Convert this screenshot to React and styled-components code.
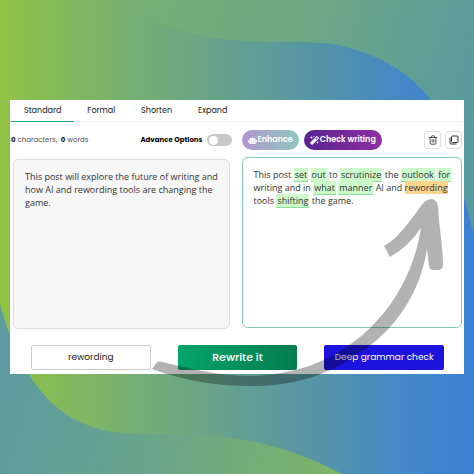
import React, { useState } from 'react'
import styled, { createGlobalStyle } from 'styled-components'
import { FaRobot, FaMagic } from 'react-icons/fa'
import { Trash2 } from 'lucide-react'

const GlobalStyle = createGlobalStyle`
  * {
    box-sizing: border-box;
  }
  body {
    margin: 0;
    font-family: Poppins, Inter, 'Liberation Sans', sans-serif;
    color: #333;
  }
  button, input {
    font-family: inherit;
  }
`

const tabs = ['Standard', 'Formal', 'Shorten', 'Expand']

function Backdrop() {
  return (
    <BackdropSvg viewBox="0 0 474 474" preserveAspectRatio="none" aria-hidden="true">
      <defs>
        <linearGradient id="base" x1="0" x2="1" y1="0" y2="0">
          <stop offset="0" stopColor="#90c346" />
          <stop offset="0.3" stopColor="#74ad76" />
          <stop offset="0.62" stopColor="#5a98a0" />
          <stop offset="0.85" stopColor="#4488c6" />
          <stop offset="1" stopColor="#3b80d4" />
        </linearGradient>
        <linearGradient id="top" gradientUnits="userSpaceOnUse" x1="130" y1="20" x2="474" y2="130">
          <stop offset="0" stopColor="#76ae74" />
          <stop offset="0.5" stopColor="#6ca786" />
          <stop offset="1" stopColor="#5999a0" />
        </linearGradient>
        <linearGradient id="bottom" gradientUnits="userSpaceOnUse" x1="0" y1="380" x2="330" y2="474">
          <stop offset="0" stopColor="#5d9ba0" />
          <stop offset="0.5" stopColor="#69a58a" />
          <stop offset="1" stopColor="#7cb468" />
        </linearGradient>
      </defs>
      <rect width="474" height="474" fill="url(#base)" />
      <path
        d="M125 0C140 20 190 42 275 42C305 42 325 41 350 48C390 60 412 76 431 100C450 128 460 185 474 235V0Z"
        fill="url(#top)"
      />
      <path
        d="M0 305C6 324 14 350 29 374C50 410 85 433 135 434C170 435 200 432 240 439C280 446 310 457 342 474H0Z"
        fill="url(#bottom)"
      />
    </BackdropSvg>
  )
}

function Arrow() {
  return (
    <ArrowSvg viewBox="0 0 474 474" preserveAspectRatio="none" aria-hidden="true">
      <path
        d="M152 369L157 362Q159 361 163 362C195 370 222 376 251 376C281 375 305 369 326 359C377 334 412 286 421 228Q408 247 390 257L384 246C399 238 411 219 424 202Q428 199 432 199Q437 200 438 206C439 228 443 246 443 265Q443 269 439 270H433Q430 270 429 266L427 249C420 295 393 333 355 356C325 376 293 386 252 386C215 386 182 380 152 369Z"
        fill="#000"
        fillOpacity="0.3"
      />
    </ArrowSvg>
  )
}

function CopyIcon() {
  return (
    <svg width="10" height="10" viewBox="0 0 20 20" fill="none" stroke="currentColor" strokeWidth="2" aria-hidden="true">
      <rect x="5" y="2" width="13" height="13" rx="2" />
      <path d="M2 6V16a2 2 0 0 0 2 2H14" strokeLinecap="round" />
    </svg>
  )
}

function App() {
  const [active, setActive] = useState('Standard')
  const [text, setText] = useState(
    'This post will explore the future of writing and how AI and rewording tools are changing the game.'
  )
  const [word, setWord] = useState('rewording')

  return (
    <Page>
      <GlobalStyle />
      <Backdrop />
      <Card>
        <Tabs>
          {tabs.map((tab) => (
            <Tab key={tab} $active={tab === active} onClick={() => setActive(tab)}>
              {tab}
            </Tab>
          ))}
        </Tabs>
        <Columns>
          <Toolbar>
            <Counter><b>0</b> characters, &nbsp;<b>0</b> words</Counter>
            <Option>
              Advance Options
              <Switch type="checkbox" role="switch" />
            </Option>
          </Toolbar>
          <Toolbar>
            <Pill $from="#b295cf" $to="#8fc7c0"><FaRobot />Enhance</Pill>
            <Pill $from="#5a2391" $to="#8f2fa3"><FaMagic />Check writing</Pill>
            <Tools>
              <IconButton aria-label="Delete"><Trash2 size={10} /></IconButton>
              <IconButton aria-label="Copy"><CopyIcon /></IconButton>
            </Tools>
          </Toolbar>
          <Source aria-label="Your text" spellCheck={false} value={text} onChange={(e) => setText(e.target.value)} />
          <Result>
            This post <Changed>set</Changed> <Changed>out</Changed> to <Changed>scrutinize</Changed> the{' '}
            <Changed>outlook</Changed> <Changed>for</Changed> writing and in <Changed>what</Changed>{' '}
            <Changed>manner</Changed> AI and <Kept>rewording</Kept> tools <Changed>shifting</Changed> the game.
          </Result>
        </Columns>
        <Actions>
          <WordInput aria-label="Word to keep" value={word} onChange={(e) => setWord(e.target.value)} />
          <RewriteButton>Rewrite it</RewriteButton>
          <GrammarButton>Deep grammar check</GrammarButton>
        </Actions>
      </Card>
      <Arrow />
    </Page>
  )
}

const Page = styled.div`
  position: relative;
  min-height: 100vh;
  display: flex;
  flex-direction: column;
  padding: 100px 10px;
`

const BackdropSvg = styled.svg`
  position: absolute;
  inset: 0;
  width: 100%;
  height: 100%;
`

const ArrowSvg = styled(BackdropSvg)`
  pointer-events: none;
`

const Card = styled.main`
  position: relative;
  background: #fff;
`

const Tabs = styled.nav`
  display: flex;
  height: 22px;
  padding-left: 1px;
  border-bottom: 1px solid #eee;
`

const Tab = styled.button`
  height: 22px;
  padding: 0 13px;
  border: 0;
  border-bottom: 1px solid ${(props) => (props.$active ? '#2ba681' : 'transparent')};
  background: none;
  font-size: 8px;
  color: #222;
  cursor: pointer;
`

const Columns = styled.div`
  display: grid;
  grid-template-columns: 1fr 1fr;
  column-gap: 10px;
  padding: 8px 2px 0 1px;
`

const Toolbar = styled.div`
  display: flex;
  align-items: center;
  gap: 5px;
  height: 20px;
  font-size: 7px;
`

const Counter = styled.span`
  color: #555;
  b {
    color: #222;
  }
`

const Option = styled.label`
  display: flex;
  align-items: center;
  gap: 4px;
  margin-left: auto;
  font-weight: 700;
  color: #000;
`

const Switch = styled.input`
  appearance: none;
  display: flex;
  align-items: center;
  width: 25px;
  height: 12px;
  margin: 0;
  padding: 1px 2px;
  border-radius: 6px;
  background: #c8c8c8;
  &::before {
    content: '';
    width: 9px;
    height: 9px;
    border-radius: 50%;
    background: #fff;
  }
  &:checked {
    justify-content: flex-end;
    background: #2ba681;
  }
`

const Pill = styled.button`
  display: flex;
  align-items: center;
  gap: 1px;
  height: 20px;
  padding: 0 6px;
  border: 0;
  border-radius: 10px;
  background: linear-gradient(90deg, ${(props) => props.$from}, ${(props) => props.$to});
  color: #fff;
  font-size: 8px;
  font-weight: 600;
  white-space: nowrap;
  svg {
    width: 9px;
    height: 9px;
  }
`

const Tools = styled.div`
  display: flex;
  gap: 4px;
  margin-left: auto;
`

const IconButton = styled.button`
  display: flex;
  align-items: center;
  justify-content: center;
  width: 17px;
  height: 18px;
  padding: 0;
  border: 1px solid #ddd;
  border-radius: 3px;
  background: #fff;
  color: #333;
`

const Source = styled.textarea`
  height: 170px;
  margin: 9px 2px 0 2px;
  padding: 10px 8px 10px 11px;
  border: 1px solid #ddd;
  border-radius: 5px;
  background: #f7f7f7;
  color: #333;
  font-family: 'Open Sans', 'Liberation Sans', sans-serif;
  font-size: 9px;
  line-height: 13px;
  resize: none;
`

const Result = styled.div`
  height: 171px;
  margin-top: 7px;
  padding: 10px 8px 10px 11px;
  border: 1px solid #7fcdb0;
  border-radius: 6px;
  font-family: 'Open Sans', 'Liberation Sans', sans-serif;
  font-size: 9px;
  line-height: 13px;
`

const Changed = styled.span`
  padding: 0 1px;
  background: #cdfacb;
  border-bottom: 1px solid #8fdc9a;
`

const Kept = styled.mark`
  background: #fcd68c;
  color: inherit;
`

const Actions = styled.div`
  display: grid;
  grid-template-columns: repeat(3, 1fr);
  gap: 27px;
  padding: 16px 20px 4px 21px;
`

const WordInput = styled.input`
  min-width: 0;
  height: 25px;
  border: 1px solid #ccc;
  border-radius: 2px;
  color: #222;
  font-size: 9px;
  text-align: center;
`

const RewriteButton = styled.button`
  height: 25px;
  border: 0;
  border-radius: 2px;
  background: linear-gradient(100deg, #04a66b, #047c4c);
  color: #fff;
  font-size: 11px;
  font-weight: 500;
`

const GrammarButton = styled(RewriteButton)`
  background: #1c14dc;
  font-size: 9px;
  font-weight: 400;
`

export default App
